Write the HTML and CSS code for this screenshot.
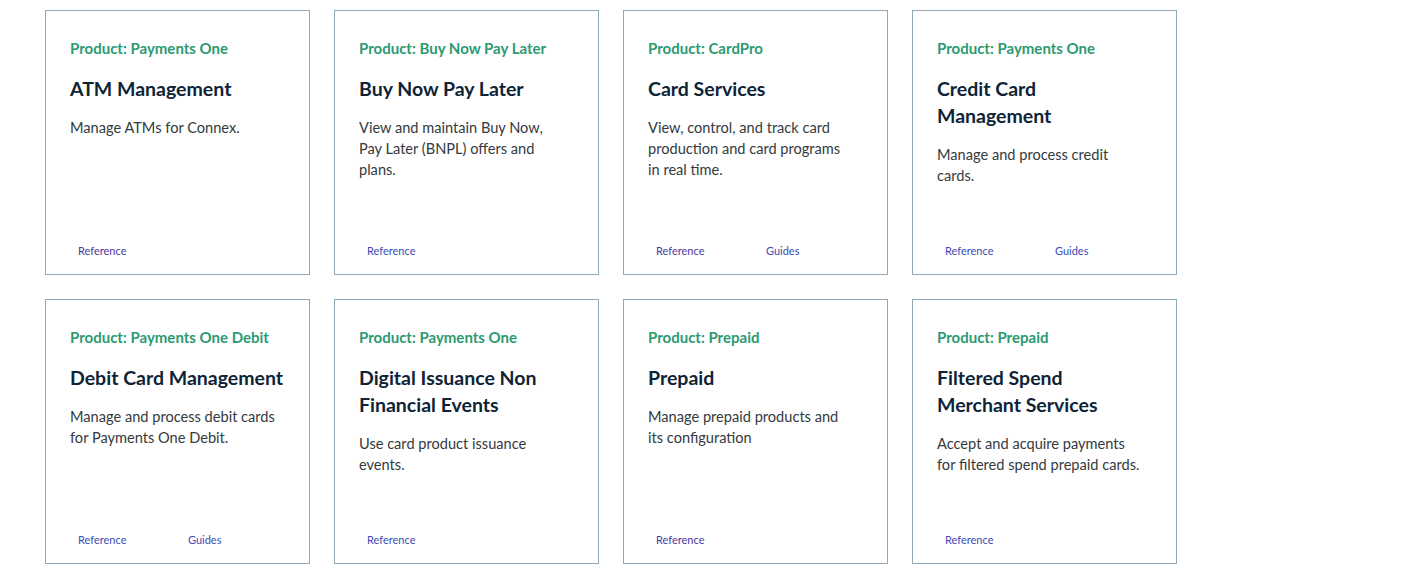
FILE: index.html
```html
<!DOCTYPE html>
<html lang="en">
<head>
<meta charset="utf-8">
<title>Products</title>
<link rel="stylesheet" href="styles.css">
</head>
<body>
<div class="grid">
  <div class="card">
    <div class="label">Product: Payments One</div>
    <h3 class="title">ATM Management</h3>
    <p class="desc">Manage ATMs for Connex.</p>
    <div class="links"><a class="link visited" href="#">Reference</a></div>
  </div>
  <div class="card">
    <div class="label">Product: Buy Now Pay Later</div>
    <h3 class="title">Buy Now Pay Later</h3>
    <p class="desc">View and maintain Buy Now,<br>Pay Later (BNPL) offers and<br>plans.</p>
    <div class="links"><a class="link" href="#">Reference</a></div>
  </div>
  <div class="card">
    <div class="label">Product: CardPro</div>
    <h3 class="title">Card Services</h3>
    <p class="desc">View, control, and track card<br>production and card programs<br>in real time.</p>
    <div class="links"><a class="link visited" href="#">Reference</a><a class="link" href="#">Guides</a></div>
  </div>
  <div class="card">
    <div class="label">Product: Payments One</div>
    <h3 class="title">Credit Card<br>Management</h3>
    <p class="desc">Manage and process credit<br>cards.</p>
    <div class="links"><a class="link" href="#">Reference</a><a class="link" href="#">Guides</a></div>
  </div>
  <div class="card">
    <div class="label">Product: Payments One Debit</div>
    <h3 class="title">Debit Card Management</h3>
    <p class="desc">Manage and process debit cards<br>for Payments One Debit.</p>
    <div class="links"><a class="link" href="#">Reference</a><a class="link" href="#">Guides</a></div>
  </div>
  <div class="card">
    <div class="label">Product: Payments One</div>
    <h3 class="title">Digital Issuance Non<br>Financial Events</h3>
    <p class="desc">Use card product issuance<br>events.</p>
    <div class="links"><a class="link" href="#">Reference</a></div>
  </div>
  <div class="card">
    <div class="label">Product: Prepaid</div>
    <h3 class="title">Prepaid</h3>
    <p class="desc">Manage prepaid products and<br>its configuration</p>
    <div class="links"><a class="link visited" href="#">Reference</a></div>
  </div>
  <div class="card">
    <div class="label">Product: Prepaid</div>
    <h3 class="title">Filtered Spend<br>Merchant Services</h3>
    <p class="desc">Accept and acquire payments<br>for filtered spend prepaid cards.</p>
    <div class="links"><a class="link" href="#">Reference</a></div>
  </div>
</div>
</body>
</html>
```

FILE: styles.css
```css
html, body {
  margin: 0;
  padding: 0;
  background: #ffffff;
}
body {
  font-family: Lato, "Noto Sans", sans-serif;
}
.grid {
  display: grid;
  grid-template-columns: repeat(4, 265px);
  column-gap: 24px;
  row-gap: 24px;
  padding: 10px 0 0 45px;
}
.card {
  box-sizing: border-box;
  height: 265px;
  border: 1px solid #8eaab9;
  padding: 27px 24px 0 24px;
  display: flex;
  flex-direction: column;
}
.label {
  font-size: 15px;
  line-height: 20px;
  font-weight: 700;
  color: #2c9a72;
}
.title {
  margin: 17px 0 0 0;
  font-size: 19.5px;
  line-height: 27px;
  font-weight: 700;
  color: #0e2436;
}
.desc {
  margin: 15px 0 0 0;
  font-size: 14.6px;
  line-height: 21px;
  color: #343a40;
}
.links {
  margin-top: auto;
  display: flex;
  height: 31px;
  align-items: flex-start;
}
.link {
  box-sizing: border-box;
  flex: 0 0 110px;
  width: 110px;
  padding: 0 8px;
  font-size: 11px;
  line-height: 16px;
  color: #3a4cb4;
  text-decoration: none;
}
.link.visited {
  color: #4b3a9c;
}
```
